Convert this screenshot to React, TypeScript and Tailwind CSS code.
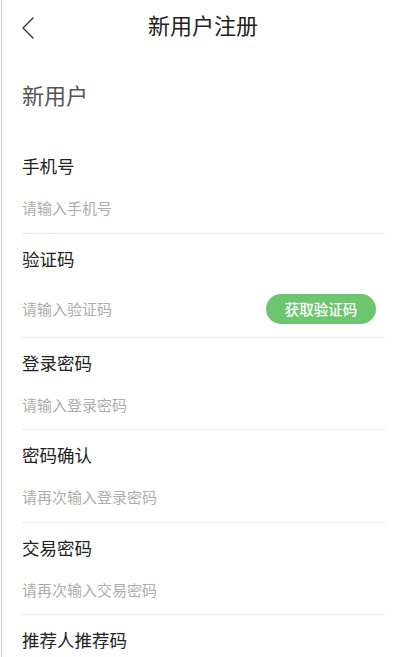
import React from "react"

type Field = {
  label: string
  placeholder: string
  action?: string
}

const fields: Field[] = [
  { label: "手机号", placeholder: "请输入手机号" },
  { label: "验证码", placeholder: "请输入验证码", action: "获取验证码" },
  { label: "登录密码", placeholder: "请输入登录密码" },
  { label: "密码确认", placeholder: "请再次输入登录密码" },
  { label: "交易密码", placeholder: "请再次输入交易密码" },
  { label: "推荐人推荐码", placeholder: "请输入推荐人推荐码" },
]

const font = { fontFamily: '"Noto Sans CJK SC", "Noto Sans", sans-serif' }

export default function App() {
  return (
    <div className="h-[657px] overflow-hidden bg-white ml-[1px] border-l border-[#cccccc]" style={font}>
      {/* Header */}
      <div className="relative h-[54px] flex items-center justify-center">
        <button className="absolute left-[18px] top-[16px] w-[16px] h-[24px] flex items-center justify-center">
          <svg width="14" height="24" viewBox="0 0 14 24" fill="none">
            <path d="M12.5 1.5 L2 12 L12.5 22.5" stroke="#333" strokeWidth="1.3" />
          </svg>
        </button>
        <h1 className="mb-[6px] text-[22px] leading-[24px] text-[#222] font-normal">新用户注册</h1>
      </div>

      <div className="pl-[20px] pr-[19px]">
        <div className="pt-[28px] pb-[35px] text-[22px] leading-[24px] text-[#555]">新用户</div>

        {fields.map((f) => (
          <div key={f.label} className="border-b border-[#ececec]">
            <div className="pt-[13px] text-[17.5px] leading-[24px] text-[#222]">{f.label}</div>
            {f.action ? (
              <div className="mt-[23px] pb-[13px] flex items-center justify-between h-[43px]">
                <input
                  placeholder={f.placeholder}
                  className="flex-1 h-[24px] outline-none text-[15px] leading-[24px] text-[#333] placeholder:text-[#adadad] bg-transparent"
                  style={font}
                />
                <button
                  className="mr-[9px] w-[110px] h-[30px] rounded-full bg-[#6cc66f] text-white text-[14.5px] font-medium"
                  style={font}
                >
                  {f.action}
                </button>
              </div>
            ) : (
              <div className="mt-[18px] pb-[12.5px]">
                <input
                  placeholder={f.placeholder}
                  className="block w-full h-[24px] outline-none text-[15px] leading-[24px] text-[#333] placeholder:text-[#adadad] bg-transparent"
                  style={font}
                />
              </div>
            )}
          </div>
        ))}
      </div>
    </div>
  )
}
